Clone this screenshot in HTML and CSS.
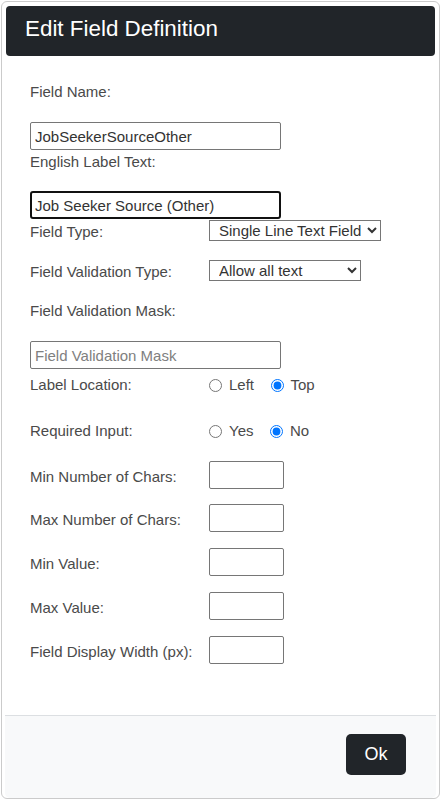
FILE: index.html
```html
<!DOCTYPE html>
<html>
<head>
<meta charset="utf-8">
<link rel="stylesheet" href="styles.css">
</head>
<body>
<div class="modal">
  <div class="hdr"><h1 class="title">Edit Field Definition</h1></div>
  <div class="content">
    <div class="lbl lbl-top">Field Name:</div>
    <input class="txt" type="text" value="JobSeekerSourceOther">
    <div class="lbl lbl-under">English Label Text:</div>
    <input class="txt txt-focus" type="text" value="Job Seeker Source (Other)">
    <div class="row row-sel1">
      <div class="rlbl rlbl-sel">Field Type:</div>
      <select class="sel sel-wide"><option>Single Line Text Field</option></select>
    </div>
    <div class="row row-sel2">
      <div class="rlbl rlbl-sel">Field Validation Type:</div>
      <select class="sel sel-narrow"><option>Allow all text</option></select>
    </div>
    <div class="lbl lbl-mask">Field Validation Mask:</div>
    <input class="txt" type="text" placeholder="Field Validation Mask">
    <div class="row row-radio1">
      <div class="rlbl">Label Location:</div>
      <div class="radios">
        <label class="opt"><input type="radio" name="loc" class="rad">Left</label>
        <label class="opt"><input type="radio" name="loc" class="rad" checked>Top</label>
      </div>
    </div>
    <div class="row row-radio2">
      <div class="rlbl">Required Input:</div>
      <div class="radios">
        <label class="opt"><input type="radio" name="req" class="rad">Yes</label>
        <label class="opt"><input type="radio" name="req" class="rad" checked>No</label>
      </div>
    </div>
    <div class="row row-num row-num-first">
      <div class="rlbl rlbl-num">Min Number of Chars:</div>
      <input class="num" type="text">
    </div>
    <div class="row row-num row-num-second">
      <div class="rlbl rlbl-num">Max Number of Chars:</div>
      <input class="num" type="text">
    </div>
    <div class="row row-num">
      <div class="rlbl rlbl-num">Min Value:</div>
      <input class="num" type="text">
    </div>
    <div class="row row-num">
      <div class="rlbl rlbl-num">Max Value:</div>
      <input class="num" type="text">
    </div>
    <div class="row row-num">
      <div class="rlbl rlbl-num">Field Display Width (px):</div>
      <input class="num" type="text">
    </div>
  </div>
  <div class="ftr"><button class="ok" type="button">Ok</button></div>
</div>
</body>
</html>
```

FILE: styles.css
```css
html, body {
  margin: 0;
  padding: 0;
  background: #ffffff;
}

body {
  font-family: "Liberation Sans", Arial, sans-serif;
  font-size: 15px;
  line-height: 20px;
  color: #4a4a4a;
}

.modal {
  box-sizing: border-box;
  margin: 1px;
  height: 798px;
  border: 1px solid #cbcbcb;
  border-radius: 6px;
  padding: 4px 4px 0 4px;
  display: flex;
  flex-direction: column;
  background: #ffffff;
}

.hdr {
  height: 50px;
  background: #212529;
  border-radius: 4px;
  padding: 0 0 4px 19px;
  box-sizing: border-box;
  display: flex;
  align-items: center;
}

.title {
  margin: 0;
  font-weight: normal;
  font-size: 22.4px;
  line-height: 26px;
  color: #ffffff;
}

.content {
  flex: 1;
  padding: 26px 24px 0 24px;
  display: flex;
  flex-direction: column;
  align-items: flex-start;
}

.lbl {
  height: 20px;
}

.lbl-top {
  margin-bottom: 20px;
}

.lbl-under {
  margin-top: 2px;
  margin-bottom: 19px;
}

.lbl-mask {
  margin-top: 20px;
  margin-bottom: 20px;
}

.txt {
  box-sizing: border-box;
  width: 251px;
  height: 28px;
  margin: 0;
  border: 1px solid #767676;
  border-radius: 2px;
  padding: 0 4px;
  font-family: "Liberation Sans", Arial, sans-serif;
  font-size: 15px;
  color: #333333;
  background: #ffffff;
  outline: none;
}

.txt::placeholder {
  color: #808080;
}

.txt-focus {
  border: 2px solid #111111;
  border-radius: 3px;
  padding: 0 3px;
}

.row {
  display: grid;
  grid-template-columns: 179px auto;
  align-items: start;
}

.row-sel1 {
  margin-top: 1px;
  height: 20px;
}

.row-sel2 {
  margin-top: 20px;
  height: 21px;
}

.rlbl-sel {
  padding-top: 2px;
  height: 18px;
}

.sel {
  box-sizing: border-box;
  height: 21px;
  margin: 0;
  border: 1px solid #767676;
  border-radius: 0;
  padding: 0 0 0 5px;
  font-family: "Liberation Sans", Arial, sans-serif;
  font-size: 15px;
  color: #333333;
  background-color: #ffffff;
}

.sel-wide {
  width: 172px;
}

.sel-narrow {
  width: 152px;
}

.row-radio1 {
  margin-top: 6px;
}

.row-radio2 {
  margin-top: 26px;
}

.radios {
  display: flex;
  align-items: center;
  height: 20px;
}

.opt {
  display: inline-flex;
  align-items: center;
  gap: 7px;
  margin-right: 16.5px;
}

.rad {
  width: 13px;
  height: 13px;
  margin: 0;
}

.row-num {
  margin-top: 16px;
  height: 28px;
}

.row-num-first {
  margin-top: 20px;
}

.row-num-second {
  margin-top: 15px;
}

.rlbl-num {
  padding-top: 6px;
}

.num {
  box-sizing: border-box;
  width: 75px;
  height: 28px;
  margin: 0;
  border: 1px solid #767676;
  border-radius: 2px;
  padding: 0 4px;
  font-family: "Liberation Sans", Arial, sans-serif;
  font-size: 15px;
  background: #ffffff;
}

.ftr {
  margin: 0 -1px;
  border-top: 1px solid #dcdfe2;
  background: #f8f9fa;
  border-radius: 0 0 5px 5px;
  height: 83px;
  box-sizing: border-box;
  padding: 18px 30px 0 0;
  display: flex;
  justify-content: flex-end;
  align-items: flex-start;
}

.ok {
  width: 60px;
  height: 41px;
  border: none;
  border-radius: 5px;
  background: #212529;
  color: #ffffff;
  font-family: "Liberation Sans", Arial, sans-serif;
  font-size: 18px;
  padding: 0;
}
```
